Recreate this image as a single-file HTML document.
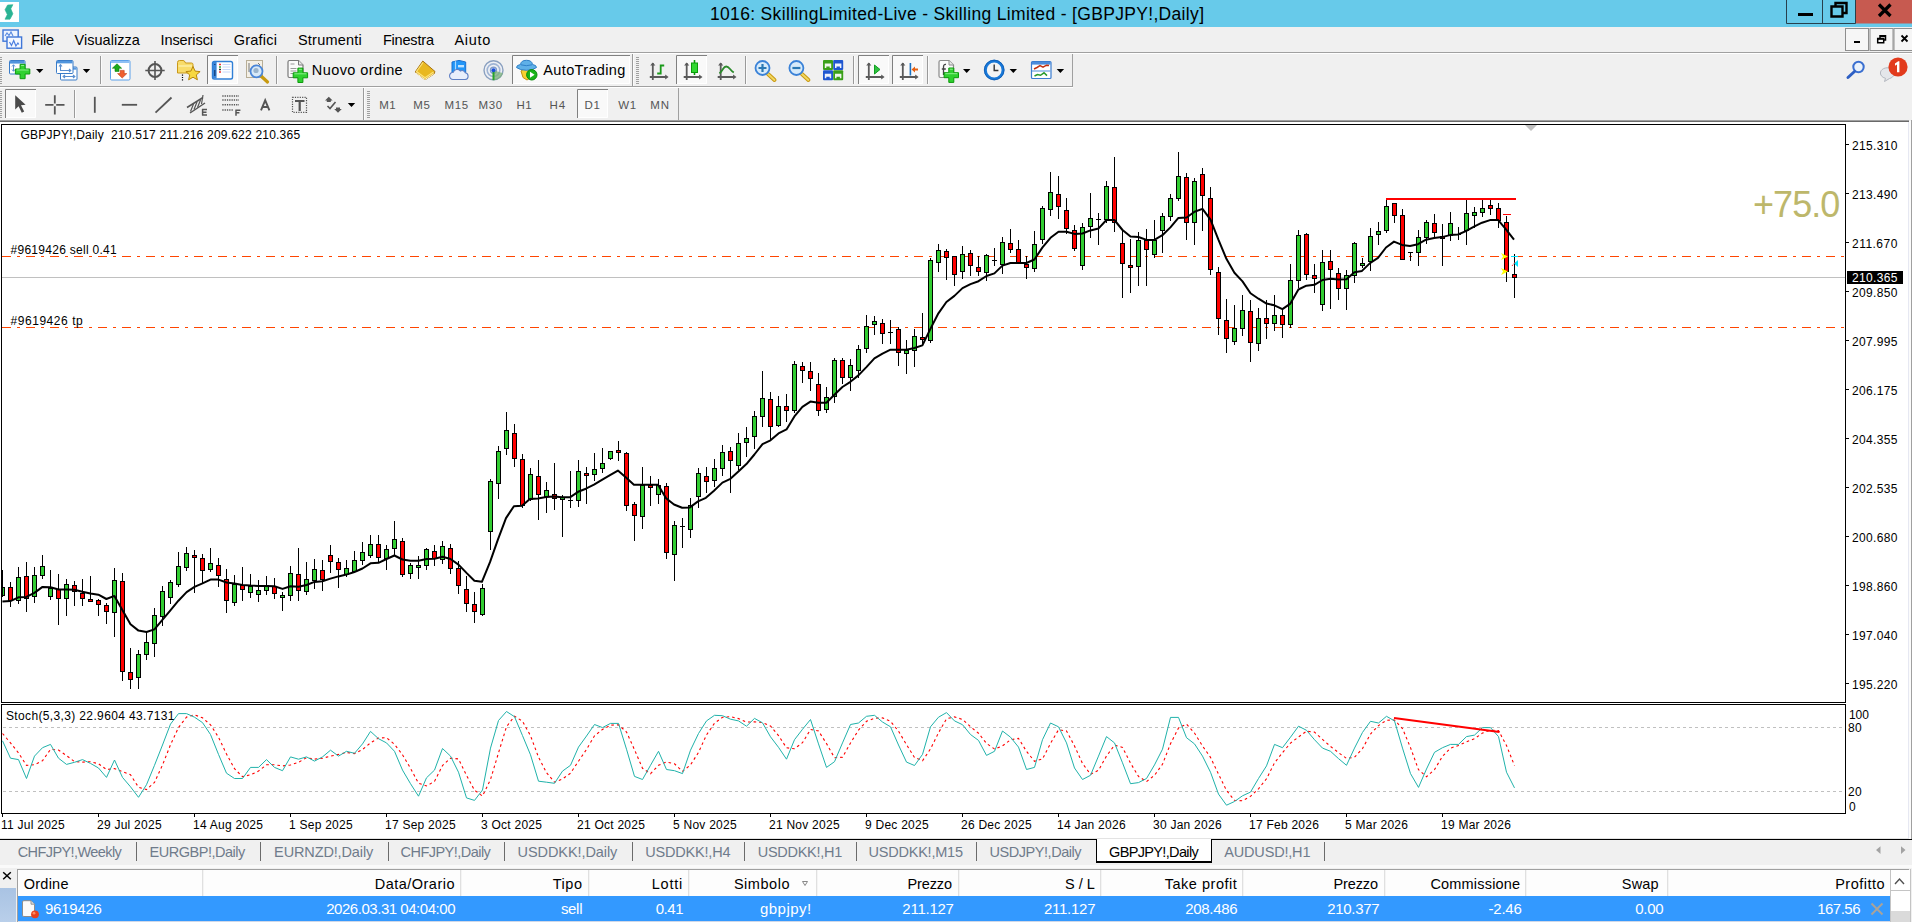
<!DOCTYPE html>
<html><head><meta charset="utf-8"><title>MT4</title><style>
html,body{margin:0;padding:0}
body{width:1912px;height:922px;position:relative;overflow:hidden;background:#f0f0f0;font-family:"Liberation Sans",sans-serif}
.t{position:absolute;white-space:pre;line-height:1;font-family:"Liberation Sans",sans-serif}
.a{position:absolute}
</style></head><body>
<div class="a" style="left:0px;top:0px;width:1912px;height:27px;background:#67caea;"></div>
<div class="a" style="left:0px;top:52px;width:1912px;height:1px;background:#a0a0a0;"></div>
<div class="a" style="left:0px;top:53px;width:1912px;height:1px;background:#ffffff;"></div>
<div class="a" style="left:0px;top:86px;width:1073px;height:1px;background:#a0a0a0;"></div>
<div class="a" style="left:0px;top:87px;width:1073px;height:1px;background:#ffffff;"></div>
<div class="a" style="left:0px;top:120px;width:1909px;height:1px;background:#a0a0a0;"></div>
<div class="a" style="left:1911px;top:120px;width:1px;height:1px;background:#a0a0a0;"></div><svg width="1912" height="719" viewBox="0 121 1912 719" style="position:absolute;left:0;top:121px" shape-rendering="crispEdges">
<rect x="0" y="121" width="1912" height="719" fill="#fff"/>
<rect x="0" y="121" width="1909" height="1" fill="#696969"/>
<rect x="1908" y="122" width="1" height="717" fill="#e6e8f2"/>
<rect x="1909" y="121" width="2" height="718" fill="#fbfbfb"/>
<rect x="1911" y="121" width="1" height="719" fill="#a0a0a0"/>
<rect x="0" y="838" width="1909" height="1" fill="#e3e3e3"/>
<g fill="#000">
<rect x="1" y="124" width="1845" height="1"/><rect x="1" y="124" width="1" height="579"/><rect x="1845" y="124" width="1" height="579"/><rect x="1" y="702" width="1845" height="1"/>
<rect x="1" y="704" width="1845" height="1"/><rect x="1" y="704" width="1" height="110"/><rect x="1845" y="704" width="1" height="110"/><rect x="1" y="813" width="1845" height="1"/>
</g>
<rect x="2" y="277" width="1843" height="1" fill="#c0c0c0"/>
<line x1="2" y1="256.5" x2="1845" y2="256.5" stroke="#ff4500" stroke-width="1" stroke-dasharray="9 6 3 6"/>
<line x1="2" y1="327.5" x2="1845" y2="327.5" stroke="#ff4500" stroke-width="1" stroke-dasharray="9 6 3 6"/>
<line x1="3" y1="727.5" x2="1845" y2="727.5" stroke="#c0c0c0" stroke-width="1" stroke-dasharray="3 3"/>
<line x1="3" y1="791.5" x2="1845" y2="791.5" stroke="#c0c0c0" stroke-width="1" stroke-dasharray="3 3"/>
<path d="M1525 125h12l-6 6z" fill="#c0c0c0" shape-rendering="auto"/>
<path d="M2.5 570v27M10.5 582v25M18.5 567v37M26.5 562v50M34.5 567v36M42.5 555v24M50.5 570v30M58.5 574v51M66.5 579v37M74.5 581v25M82.5 579v27M90.5 576v26M98.5 599v17M106.5 603v21M114.5 568v69M122.5 573v108M130.5 648v41M138.5 650v39M146.5 632v28M154.5 608v49M162.5 586v40M170.5 580v24M178.5 552v35M186.5 547v24M194.5 550v43M202.5 554v29M210.5 548v24M218.5 558v29M226.5 569v44M234.5 575v31M242.5 567v34M250.5 574v24M258.5 580v22M266.5 576v19M274.5 578v21M282.5 592v19M290.5 566v35M298.5 548v53M306.5 562v33M314.5 559v30M322.5 560v31M330.5 545v28M338.5 558v30M346.5 560v17M354.5 551v22M362.5 542v23M370.5 535v23M378.5 535v27M386.5 545v25M394.5 521v34M402.5 538v39M410.5 563v16M418.5 556v23M426.5 548v22M434.5 545v21M442.5 541v23M450.5 544v30M458.5 561v33M466.5 576v36M474.5 592v31M482.5 584v32M490.5 479v71M498.5 446v53M506.5 412v43M514.5 424v43M522.5 454v54M530.5 468v33M538.5 460v60M546.5 482v31M554.5 463v47M562.5 495v42M570.5 471v37M578.5 460v47M586.5 467v37M594.5 453v28M602.5 448v25M610.5 451v9M618.5 441v20M626.5 452v59M634.5 502v39M642.5 467v62M650.5 476v30M658.5 479v25M666.5 483v76M674.5 521v60M682.5 518v30M690.5 498v40M698.5 468v40M706.5 467v26M714.5 459v28M722.5 445v31M730.5 447v46M738.5 433v37M746.5 427v30M754.5 411v38M762.5 371v56M770.5 392v48M778.5 396v31M786.5 394v28M794.5 361v52M802.5 362v21M810.5 362v29M818.5 373v43M826.5 387v26M834.5 358v45M842.5 358v26M850.5 359v32M858.5 345v33M866.5 315v38M874.5 316v19M882.5 319v25M890.5 320v24M898.5 327v39M906.5 340v34M914.5 329v38M922.5 313v32M930.5 258v85M938.5 244v28M946.5 249v31M954.5 256v30M962.5 246v33M970.5 250v26M978.5 256v20M986.5 254v27M994.5 248v18M1002.5 237v37M1010.5 229v24M1018.5 240v23M1026.5 256v23M1034.5 231v41M1042.5 206v38M1050.5 172v44M1058.5 176v43M1066.5 198v36M1074.5 225v26M1082.5 223v47M1090.5 193v45M1098.5 213v32M1106.5 181v42M1114.5 157v75M1122.5 230v68M1130.5 239v54M1138.5 232v54M1146.5 229v57M1154.5 220v38M1162.5 213v40M1170.5 194v27M1178.5 152v49M1186.5 173v67M1194.5 178v67M1202.5 168v63M1210.5 187v88M1218.5 267v68M1226.5 299v54M1234.5 305v40M1242.5 295v41M1250.5 300v62M1258.5 308v43M1266.5 300v39M1274.5 295v36M1282.5 309v29M1290.5 264v64M1298.5 230v58M1306.5 233v47M1314.5 264v29M1322.5 250v61M1330.5 250v59M1338.5 268v32M1346.5 270v40M1354.5 242v41M1362.5 258v10M1370.5 228v43M1378.5 222v23M1386.5 199v34M1394.5 203v20M1402.5 209v51M1410.5 252v9M1418.5 230v36M1426.5 220v24M1434.5 214v24M1442.5 224v42M1450.5 212v29M1458.5 227v13M1466.5 199v46M1474.5 207v21M1482.5 200v17M1490.5 200v15M1498.5 203v25M1506.5 216v66M1514.5 254v44" stroke="#000" stroke-width="1" fill="none"/>
<g fill="#32cd32" stroke="#000" stroke-width="1"><rect x="2.5" y="587.5" width="2" height="8"/><rect x="16.5" y="577.5" width="4" height="23"/><rect x="32.5" y="575.5" width="4" height="21"/><rect x="40.5" y="566.5" width="4" height="9"/><rect x="48.5" y="588.5" width="4" height="8"/><rect x="64.5" y="584.5" width="4" height="14"/><rect x="112.5" y="580.5" width="4" height="32"/><rect x="136.5" y="654.5" width="4" height="23"/><rect x="144.5" y="642.5" width="4" height="12"/><rect x="152.5" y="615.5" width="4" height="28"/><rect x="160.5" y="591.5" width="4" height="25"/><rect x="168.5" y="582.5" width="4" height="15"/><rect x="176.5" y="566.5" width="4" height="18"/><rect x="184.5" y="553.5" width="4" height="14"/><rect x="208.5" y="563.5" width="4" height="6"/><rect x="232.5" y="584.5" width="4" height="18"/><rect x="248.5" y="586.5" width="4" height="6"/><rect x="256.5" y="590.5" width="4" height="4"/><rect x="264.5" y="585.5" width="4" height="5"/><rect x="280.5" y="595.5" width="4" height="2"/><rect x="288.5" y="573.5" width="4" height="22"/><rect x="304.5" y="579.5" width="4" height="12"/><rect x="312.5" y="569.5" width="4" height="11"/><rect x="344.5" y="568.5" width="4" height="6"/><rect x="352.5" y="560.5" width="4" height="11"/><rect x="360.5" y="552.5" width="4" height="8"/><rect x="368.5" y="544.5" width="4" height="11"/><rect x="384.5" y="549.5" width="4" height="9"/><rect x="392.5" y="539.5" width="4" height="9"/><rect x="408.5" y="565.5" width="4" height="8"/><rect x="416.5" y="565.5" width="4" height="2"/><rect x="424.5" y="549.5" width="4" height="16"/><rect x="440.5" y="546.5" width="4" height="13"/><rect x="480.5" y="588.5" width="4" height="26"/><rect x="488.5" y="481.5" width="4" height="50"/><rect x="496.5" y="451.5" width="4" height="32"/><rect x="504.5" y="430.5" width="4" height="18"/><rect x="528.5" y="474.5" width="4" height="25"/><rect x="544.5" y="490.5" width="4" height="6"/><rect x="560.5" y="497.5" width="4" height="2"/><rect x="576.5" y="471.5" width="4" height="29"/><rect x="592.5" y="469.5" width="4" height="5"/><rect x="600.5" y="463.5" width="4" height="5"/><rect x="608.5" y="451.5" width="4" height="7"/><rect x="640.5" y="485.5" width="4" height="31"/><rect x="656.5" y="485.5" width="4" height="9"/><rect x="672.5" y="525.5" width="4" height="29"/><rect x="688.5" y="505.5" width="4" height="24"/><rect x="696.5" y="473.5" width="4" height="23"/><rect x="712.5" y="468.5" width="4" height="12"/><rect x="720.5" y="452.5" width="4" height="16"/><rect x="736.5" y="443.5" width="4" height="22"/><rect x="744.5" y="438.5" width="4" height="4"/><rect x="752.5" y="416.5" width="4" height="20"/><rect x="760.5" y="398.5" width="4" height="18"/><rect x="776.5" y="406.5" width="4" height="19"/><rect x="792.5" y="364.5" width="4" height="46"/><rect x="824.5" y="397.5" width="4" height="12"/><rect x="832.5" y="360.5" width="4" height="36"/><rect x="848.5" y="365.5" width="4" height="12"/><rect x="856.5" y="349.5" width="4" height="21"/><rect x="864.5" y="326.5" width="4" height="22"/><rect x="872.5" y="321.5" width="4" height="3"/><rect x="904.5" y="350.5" width="4" height="3"/><rect x="912.5" y="336.5" width="4" height="14"/><rect x="928.5" y="260.5" width="4" height="80"/><rect x="936.5" y="250.5" width="4" height="12"/><rect x="960.5" y="254.5" width="4" height="17"/><rect x="984.5" y="255.5" width="4" height="17"/><rect x="1000.5" y="242.5" width="4" height="22"/><rect x="1032.5" y="244.5" width="4" height="24"/><rect x="1040.5" y="208.5" width="4" height="31"/><rect x="1048.5" y="192.5" width="4" height="17"/><rect x="1080.5" y="227.5" width="4" height="38"/><rect x="1088.5" y="218.5" width="4" height="8"/><rect x="1104.5" y="186.5" width="4" height="33"/><rect x="1136.5" y="240.5" width="4" height="26"/><rect x="1152.5" y="240.5" width="4" height="14"/><rect x="1160.5" y="216.5" width="4" height="14"/><rect x="1168.5" y="198.5" width="4" height="18"/><rect x="1176.5" y="176.5" width="4" height="22"/><rect x="1192.5" y="181.5" width="4" height="41"/><rect x="1232.5" y="328.5" width="4" height="13"/><rect x="1240.5" y="310.5" width="4" height="18"/><rect x="1256.5" y="318.5" width="4" height="25"/><rect x="1272.5" y="315.5" width="4" height="8"/><rect x="1288.5" y="280.5" width="4" height="44"/><rect x="1296.5" y="235.5" width="4" height="45"/><rect x="1320.5" y="262.5" width="4" height="42"/><rect x="1344.5" y="275.5" width="4" height="13"/><rect x="1352.5" y="243.5" width="4" height="32"/><rect x="1360.5" y="263.5" width="4" height="2"/><rect x="1368.5" y="236.5" width="4" height="25"/><rect x="1376.5" y="231.5" width="4" height="3"/><rect x="1384.5" y="206.5" width="4" height="24"/><rect x="1416.5" y="237.5" width="4" height="15"/><rect x="1424.5" y="222.5" width="4" height="15"/><rect x="1448.5" y="223.5" width="4" height="12"/><rect x="1464.5" y="213.5" width="4" height="17"/><rect x="1472.5" y="212.5" width="4" height="3"/><rect x="1480.5" y="208.5" width="4" height="4"/></g>
<g fill="#ff0000" stroke="#000" stroke-width="1"><rect x="8.5" y="587.5" width="4" height="13"/><rect x="24.5" y="576.5" width="4" height="22"/><rect x="56.5" y="589.5" width="4" height="9"/><rect x="72.5" y="585.5" width="4" height="6"/><rect x="80.5" y="593.5" width="4" height="5"/><rect x="88.5" y="599.5" width="4" height="2"/><rect x="96.5" y="600.5" width="4" height="4"/><rect x="104.5" y="605.5" width="4" height="6"/><rect x="120.5" y="581.5" width="4" height="90"/><rect x="128.5" y="672.5" width="4" height="7"/><rect x="192.5" y="555.5" width="4" height="2"/><rect x="200.5" y="558.5" width="4" height="12"/><rect x="216.5" y="565.5" width="4" height="10"/><rect x="224.5" y="579.5" width="4" height="21"/><rect x="240.5" y="585.5" width="4" height="4"/><rect x="272.5" y="586.5" width="4" height="7"/><rect x="296.5" y="574.5" width="4" height="16"/><rect x="320.5" y="570.5" width="4" height="9"/><rect x="328.5" y="555.5" width="4" height="6"/><rect x="336.5" y="562.5" width="4" height="7"/><rect x="376.5" y="544.5" width="4" height="13"/><rect x="400.5" y="541.5" width="4" height="33"/><rect x="432.5" y="551.5" width="4" height="7"/><rect x="448.5" y="548.5" width="4" height="20"/><rect x="456.5" y="568.5" width="4" height="17"/><rect x="464.5" y="589.5" width="4" height="14"/><rect x="472.5" y="604.5" width="4" height="7"/><rect x="512.5" y="433.5" width="4" height="25"/><rect x="520.5" y="459.5" width="4" height="46"/><rect x="536.5" y="476.5" width="4" height="18"/><rect x="552.5" y="494.5" width="4" height="4"/><rect x="584.5" y="473.5" width="4" height="2"/><rect x="616.5" y="450.5" width="4" height="2"/><rect x="624.5" y="453.5" width="4" height="52"/><rect x="632.5" y="504.5" width="4" height="11"/><rect x="648.5" y="485.5" width="4" height="2"/><rect x="664.5" y="486.5" width="4" height="66"/><rect x="704.5" y="476.5" width="4" height="5"/><rect x="728.5" y="451.5" width="4" height="9"/><rect x="768.5" y="399.5" width="4" height="27"/><rect x="784.5" y="406.5" width="4" height="4"/><rect x="800.5" y="366.5" width="4" height="4"/><rect x="808.5" y="371.5" width="4" height="7"/><rect x="816.5" y="384.5" width="4" height="26"/><rect x="840.5" y="360.5" width="4" height="17"/><rect x="880.5" y="323.5" width="4" height="10"/><rect x="896.5" y="329.5" width="4" height="23"/><rect x="920.5" y="337.5" width="4" height="2"/><rect x="944.5" y="251.5" width="4" height="6"/><rect x="952.5" y="256.5" width="4" height="18"/><rect x="968.5" y="253.5" width="4" height="12"/><rect x="976.5" y="267.5" width="4" height="4"/><rect x="1008.5" y="243.5" width="4" height="6"/><rect x="1016.5" y="249.5" width="4" height="13"/><rect x="1024.5" y="264.5" width="4" height="3"/><rect x="1056.5" y="194.5" width="4" height="12"/><rect x="1064.5" y="210.5" width="4" height="18"/><rect x="1072.5" y="230.5" width="4" height="18"/><rect x="1112.5" y="187.5" width="4" height="35"/><rect x="1120.5" y="243.5" width="4" height="20"/><rect x="1128.5" y="265.5" width="4" height="2"/><rect x="1144.5" y="240.5" width="4" height="9"/><rect x="1184.5" y="177.5" width="4" height="45"/><rect x="1200.5" y="174.5" width="4" height="21"/><rect x="1208.5" y="198.5" width="4" height="71"/><rect x="1216.5" y="272.5" width="4" height="46"/><rect x="1224.5" y="320.5" width="4" height="18"/><rect x="1248.5" y="311.5" width="4" height="31"/><rect x="1264.5" y="318.5" width="4" height="5"/><rect x="1280.5" y="315.5" width="4" height="9"/><rect x="1304.5" y="234.5" width="4" height="40"/><rect x="1312.5" y="275.5" width="4" height="3"/><rect x="1328.5" y="261.5" width="4" height="8"/><rect x="1336.5" y="273.5" width="4" height="15"/><rect x="1392.5" y="203.5" width="4" height="12"/><rect x="1400.5" y="215.5" width="4" height="44"/><rect x="1432.5" y="223.5" width="4" height="9"/><rect x="1440.5" y="236.5" width="4" height="2"/><rect x="1488.5" y="205.5" width="4" height="3"/><rect x="1496.5" y="208.5" width="4" height="12"/><rect x="1504.5" y="222.5" width="4" height="49"/><rect x="1512.5" y="274.5" width="4" height="3"/></g>
<path d="M568 500h5v1h-5zM680 526h5v1h-5zM888 332h5v1h-5zM992 260h5v1h-5zM1096 219h5v1h-5zM1408 252h5v1h-5zM1456 234h5v1h-5z" fill="#000"/>
<polyline points="2.4,601.6 10.4,601.1 18.4,597.3 26.4,596.9 34.4,592.9 42.5,586.9 50.5,587.2 58.5,589.5 66.5,589.5 74.4,589.8 82.4,591.7 90.4,593.4 98.4,594.7 106.4,599 114.4,595.9 122.5,610.3 130.5,624.2 138.5,630.6 146.5,632 154.4,629.4 162.4,619.8 170.4,610.3 178.4,600.7 186.6,592.1 194.5,586.9 202.5,583.4 210.5,579.6 218.5,579.6 226.5,582.5 234.4,583.4 242.4,585 250.4,585.6 258.4,585.9 266.4,585.9 274.4,586.2 282.5,588.9 290.5,586.2 298.5,586.8 306.5,585 314.4,581.9 322.4,581.2 330.4,578.6 338.4,576.4 346.4,574.6 354.4,572 362.5,568.5 370.5,563.3 378.5,562.8 386.5,559 394.4,555.5 402.4,559.5 410.4,560.7 418.4,560.7 426.6,559 434.5,558.7 442.5,556.7 450.5,559 458.5,564.6 466.5,572.9 474.4,580.7 481.9,581.8 490,562.2 497.9,539.6 506,518.1 513.9,506.2 522,505.7 529.9,499 538,498.5 546.1,497.1 554,496.6 562.1,497.3 569.9,497.3 578.1,491.8 585.9,488.7 594,484.7 601.9,479.9 610,475.1 617.9,470.6 626,477.5 633.9,484.7 642,484.7 649.9,484.7 658,484.7 666.1,498.3 674,504.5 682.1,507.8 689.9,507.4 698,501.4 705.9,497.8 714,490.7 722.4,482.6 730.4,478.8 738.4,471.4 746.4,464.1 754.4,454.5 762.5,444.1 770.5,440.3 778.5,433.4 786.5,429.4 794.4,416.4 802.4,406.8 810.4,401.6 818.4,402.8 826.4,402.8 834.4,394.7 842.4,387 850.4,381.8 858.4,375.4 866.4,367.1 874.4,358.4 882.5,353.6 890.5,349.7 898.5,349.7 906.5,349.7 914.4,348 922.4,345.4 930.4,328.9 938.4,313.3 946.4,302 954.4,295.9 962.5,288.1 970.5,284.1 978.5,281.2 986.5,276 994.4,273.4 1002.4,265.6 1010.4,263 1018.4,263 1026.4,263 1034.4,259.5 1042.5,247.4 1050.5,237.8 1058.5,231.8 1066.5,231.8 1074.4,233.9 1082.4,233.5 1090.4,230.4 1098.4,228.6 1106.4,220 1114.4,220 1122.5,230 1130.5,236.6 1138.5,237 1146.5,239.9 1154.4,239.9 1162.4,235.2 1170.4,227.4 1178.4,217.9 1186.6,217.5 1194.5,211.8 1202.5,208.9 1210.5,219.6 1218.4,239.7 1226.4,258.8 1234.4,272.7 1242.5,281.4 1250.5,293.2 1258.5,298.7 1266.5,303.6 1274.4,305.3 1282.4,309.1 1290.4,303.6 1298.4,289.5 1306.4,285.7 1314.4,284.8 1322.5,280 1330.5,278.8 1338.5,279.6 1346.5,279.3 1354.4,272.3 1362,270.9 1370,263.1 1378,257.9 1386,247.5 1394,241.6 1402,244.9 1410,245.9 1418,244.2 1426,239.7 1434.1,238.1 1442,237.1 1449.9,235.1 1458,234.5 1465.9,231.2 1474,226.6 1482,222.7 1490,220.1 1498,219.9 1506,229.3 1514,239.7" fill="none" stroke="#000" stroke-width="2" stroke-linejoin="round" shape-rendering="auto"/>
<rect x="1386" y="198" width="130" height="2" fill="#ff0000"/>
<rect x="1503" y="214" width="8" height="1" fill="#ff0000"/>
<g shape-rendering="auto"><path d="M1501 253l7 3.5l-7 3.5l2-3.5z" fill="#ffff00"/><path d="M1501 268l7 3.5l-7 3.5l2-3.5z" fill="#ffff00"/>
<rect x="1511" y="256" width="7" height="1" fill="#00e5ff"/><path d="M1518 260v7l-4-3.5z" fill="#00e5ff"/>
<path d="M1512 266l3-4" stroke="#ff0000" stroke-width="1" stroke-dasharray="1 1"/></g>
<g shape-rendering="auto" fill="none">
<polyline points="2.5,733.5 10.5,742.9 18.5,752.9 26.5,765.4 34.5,764.7 42.5,760.7 50.5,749.4 58.5,750.1 66.5,755.6 74.5,761.6 82.5,762.1 90.5,761.8 98.5,763.7 106.5,769.6 114.5,768.5 122.5,771.6 130.5,774.8 138.5,787.2 146.5,789.6 154.5,782.4 162.5,765 170.5,744.8 178.5,727.5 186.5,717.1 194.5,714.8 202.5,717.8 210.5,724.8 218.5,737.2 226.5,754 234.5,768.7 242.5,776.7 250.5,774.8 258.5,771.1 266.5,764.8 274.5,764.8 282.5,765.9 290.5,765 298.5,762.3 306.5,757.7 314.5,759.1 322.5,758.3 330.5,756.1 338.5,754.4 346.5,752.5 354.5,753.6 362.5,749.5 370.5,742.9 378.5,738 386.5,737.7 394.5,744.3 402.5,754.7 410.5,768.3 418.5,783.3 426.5,785.9 434.5,781.4 442.5,765.5 450.5,758.2 458.5,758.9 466.5,775.4 474.5,790.2 482.5,796.1 490.5,779.5 498.5,752.9 506.5,726.7 514.5,716.2 522.5,721.3 530.5,735.7 538.5,757.2 546.5,772.7 554.5,782.2 562.5,778.9 570.5,773.2 578.5,761.2 586.5,749.4 594.5,735.8 602.5,729.4 610.5,725.2 618.5,724.8 626.5,732 634.5,749.7 642.5,768.3 650.5,773.7 658.5,765.3 666.5,762 674.5,763.8 682.5,771.3 690.5,764.9 698.5,752.4 706.5,734.9 714.5,723.2 722.5,717.3 730.5,716.7 738.5,718.6 746.5,722.1 754.5,721.8 762.5,722.5 770.5,726 778.5,735.6 786.5,747.8 794.5,748.7 802.5,742.7 810.5,729.5 818.5,730.9 826.5,743.6 834.5,757.7 842.5,757.3 850.5,743 858.5,730.1 866.5,721.3 874.5,718.2 882.5,717.9 890.5,721.3 898.5,731.2 906.5,744.6 914.5,757.5 922.5,760.7 930.5,748.9 938.5,732.8 946.5,718.8 954.5,716.9 962.5,719.4 970.5,726.7 978.5,733.2 986.5,743.4 994.5,749 1002.5,745.9 1010.5,739.8 1018.5,738.4 1026.5,751.3 1034.5,761.3 1042.5,758.9 1050.5,743.4 1058.5,729.8 1066.5,730.9 1074.5,745.9 1082.5,763.5 1090.5,774.3 1098.5,770.3 1106.5,756 1114.5,745.2 1122.5,747.4 1130.5,763.1 1138.5,776.4 1146.5,781.6 1154.5,775.3 1162.5,764.2 1170.5,743.8 1178.5,728 1186.5,724.1 1194.5,733 1202.5,745.9 1210.5,757.4 1218.5,774.1 1226.5,790.5 1234.5,800.3 1242.5,800.8 1250.5,796.4 1258.5,788.8 1266.5,778.8 1274.5,762.9 1282.5,752.6 1290.5,743.1 1298.5,737 1306.5,731.2 1314.5,732.1 1322.5,739.4 1330.5,746.4 1338.5,752.6 1346.5,758.4 1354.5,757.3 1362.5,748.6 1370.5,734 1378.5,725.6 1386.5,720.2 1394.5,720.1 1402.5,728.5 1410.5,747.6 1418.5,769.7 1426.5,776.7 1434.5,769.6 1442.5,756.3 1450.5,748.1 1458.5,745.5 1466.5,741.8 1474.5,738.7 1482.5,733.1 1490.5,730.1 1498.5,730.6 1506.5,745.5 1514.5,765.6" stroke="#ff0000" stroke-width="1.1" stroke-dasharray="2.6 3"/>
<polyline points="2.5,740.8 10.5,758.2 18.5,759.6 26.5,778.5 34.5,756.1 42.5,747.7 50.5,744.4 58.5,758.2 66.5,764.4 74.5,762.3 82.5,759.6 90.5,763.4 98.5,768 106.5,777.4 114.5,760 122.5,777.4 130.5,786.8 138.5,797.3 146.5,784.7 154.5,765.3 162.5,745 170.5,724.1 178.5,713.6 186.5,713.6 194.5,717.2 202.5,722.6 210.5,734.5 218.5,754.4 226.5,773.2 234.5,778.5 242.5,778.5 250.5,767.4 258.5,767.4 266.5,759.6 274.5,767.4 282.5,770.7 290.5,756.9 298.5,759.2 306.5,756.9 314.5,761.1 322.5,756.9 330.5,750.2 338.5,756.1 346.5,751.3 354.5,753.3 362.5,743.9 370.5,731.4 378.5,738.7 386.5,742.9 394.5,751.3 402.5,770.1 410.5,783.7 418.5,796.2 426.5,777.8 434.5,770.1 442.5,748.5 450.5,756.1 458.5,772.2 466.5,797.9 474.5,800.4 482.5,790 490.5,748.1 498.5,720.5 506.5,711.5 514.5,716.7 522.5,735.6 530.5,754.8 538.5,781.2 546.5,782.2 554.5,783.3 562.5,771.1 570.5,765.3 578.5,747.1 586.5,736 594.5,724.5 602.5,727.6 610.5,723.4 618.5,723.4 626.5,749.2 634.5,776.4 642.5,779.5 650.5,765.3 658.5,751.3 666.5,769.5 674.5,770.7 682.5,773.6 690.5,750.2 698.5,733.5 706.5,720.9 714.5,715.3 722.5,715.7 730.5,719.2 738.5,720.9 746.5,726.2 754.5,718.4 762.5,722.8 770.5,736.8 778.5,747.3 786.5,759.2 794.5,739.7 802.5,729.3 810.5,719.5 818.5,743.9 826.5,767.4 834.5,761.7 842.5,742.9 850.5,724.5 858.5,723 866.5,716.3 874.5,715.3 882.5,722 890.5,726.8 898.5,745 906.5,762.1 914.5,765.5 922.5,754.4 930.5,726.8 938.5,717.2 946.5,712.6 954.5,720.9 962.5,724.7 970.5,734.5 978.5,740.4 986.5,755.4 994.5,751.3 1002.5,731 1010.5,737.2 1018.5,747.1 1026.5,769.5 1034.5,767.4 1042.5,739.7 1050.5,723 1058.5,726.8 1066.5,742.9 1074.5,768 1082.5,779.5 1090.5,775.3 1098.5,756.1 1106.5,736.6 1114.5,742.9 1122.5,762.8 1130.5,783.7 1138.5,782.6 1146.5,778.5 1154.5,764.9 1162.5,749.2 1170.5,717.4 1178.5,717.4 1186.5,737.7 1194.5,743.9 1202.5,756.1 1210.5,772.2 1218.5,794.1 1226.5,805.2 1234.5,801.5 1242.5,795.8 1250.5,792.1 1258.5,778.5 1266.5,765.9 1274.5,744.4 1282.5,747.7 1290.5,737.2 1298.5,726.2 1306.5,730.3 1314.5,739.7 1322.5,748.1 1330.5,751.3 1338.5,758.6 1346.5,765.3 1354.5,748.1 1362.5,732.4 1370.5,721.3 1378.5,723 1386.5,716.3 1394.5,720.9 1402.5,748.1 1410.5,773.6 1418.5,787.4 1426.5,769 1434.5,752.3 1442.5,747.7 1450.5,744.4 1458.5,744.4 1466.5,736.6 1474.5,735.1 1482.5,727.6 1490.5,727.6 1498.5,736.6 1506.5,772.2 1514.5,787.9" stroke="#20b2aa" stroke-width="1"/>
<path d="M1394 718L1499.5 732" stroke="#ff0000" stroke-width="2.2"/>
</g>
<g fill="#000">
<rect x="1846" y="144" width="3" height="1"/>
<rect x="1846" y="193" width="3" height="1"/>
<rect x="1846" y="242" width="3" height="1"/>
<rect x="1846" y="291" width="3" height="1"/>
<rect x="1846" y="340" width="3" height="1"/>
<rect x="1846" y="389" width="3" height="1"/>
<rect x="1846" y="438" width="3" height="1"/>
<rect x="1846" y="487" width="3" height="1"/>
<rect x="1846" y="536" width="3" height="1"/>
<rect x="1846" y="585" width="3" height="1"/>
<rect x="1846" y="634" width="3" height="1"/>
<rect x="1846" y="683" width="3" height="1"/>
</g>
<rect x="1847" y="271" width="56" height="13" fill="#000"/>
<g fill="#000">
<rect x="2" y="814" width="1" height="3"/>
<rect x="98" y="814" width="1" height="3"/>
<rect x="194" y="814" width="1" height="3"/>
<rect x="290" y="814" width="1" height="3"/>
<rect x="386" y="814" width="1" height="3"/>
<rect x="482" y="814" width="1" height="3"/>
<rect x="578" y="814" width="1" height="3"/>
<rect x="674" y="814" width="1" height="3"/>
<rect x="770" y="814" width="1" height="3"/>
<rect x="866" y="814" width="1" height="3"/>
<rect x="962" y="814" width="1" height="3"/>
<rect x="1058" y="814" width="1" height="3"/>
<rect x="1154" y="814" width="1" height="3"/>
<rect x="1250" y="814" width="1" height="3"/>
<rect x="1346" y="814" width="1" height="3"/>
<rect x="1442" y="814" width="1" height="3"/>
</g>
<rect x="0" y="839" width="1096" height="1" fill="#000"/><rect x="1211" y="839" width="701" height="1" fill="#000"/>
</svg><div class="a" style="left:1096px;top:839px;width:116px;height:24px;background:#fff;box-sizing:border-box;border:1px solid #000;border-top:none;border-bottom:2px solid #000"></div>
<div class="a" style="left:136px;top:842px;width:1px;height:19px;background:#6b6b6b;"></div>
<div class="a" style="left:260px;top:842px;width:1px;height:19px;background:#6b6b6b;"></div>
<div class="a" style="left:388px;top:842px;width:1px;height:19px;background:#6b6b6b;"></div>
<div class="a" style="left:504px;top:842px;width:1px;height:19px;background:#6b6b6b;"></div>
<div class="a" style="left:632px;top:842px;width:1px;height:19px;background:#6b6b6b;"></div>
<div class="a" style="left:744px;top:842px;width:1px;height:19px;background:#6b6b6b;"></div>
<div class="a" style="left:856px;top:842px;width:1px;height:19px;background:#6b6b6b;"></div>
<div class="a" style="left:976px;top:842px;width:1px;height:19px;background:#6b6b6b;"></div>
<div class="a" style="left:1324px;top:842px;width:1px;height:19px;background:#6b6b6b;"></div>
<div class="a" style="left:0px;top:865px;width:1912px;height:3px;background:#fafafa;"></div>
<div class="a" style="left:0px;top:868px;width:1912px;height:1px;background:#f0f0f0;"></div>
<div class="a" style="left:0px;top:869px;width:17px;height:53px;background:#f0f0f0;"></div>
<div class="a" style="left:0px;top:888px;width:16px;height:34px;background:linear-gradient(#a9c3e3,#b9cfea);"></div>
<div class="a" style="left:17px;top:869px;width:1892px;height:53px;background:#fff;box-sizing:border-box;border-top:1px solid #a0a0a0;border-left:1px solid #a0a0a0"></div>
<div class="a" style="left:18px;top:870px;width:1873px;height:26px;background:#fdfdfd;"></div>
<div class="a" style="left:202px;top:870px;width:1px;height:26px;background:#e0e0e0;"></div>
<div class="a" style="left:203px;top:870px;width:1px;height:26px;background:#f4f4f4;"></div>
<div class="a" style="left:460px;top:870px;width:1px;height:26px;background:#e0e0e0;"></div>
<div class="a" style="left:461px;top:870px;width:1px;height:26px;background:#f4f4f4;"></div>
<div class="a" style="left:588px;top:870px;width:1px;height:26px;background:#e0e0e0;"></div>
<div class="a" style="left:589px;top:870px;width:1px;height:26px;background:#f4f4f4;"></div>
<div class="a" style="left:688px;top:870px;width:1px;height:26px;background:#e0e0e0;"></div>
<div class="a" style="left:689px;top:870px;width:1px;height:26px;background:#f4f4f4;"></div>
<div class="a" style="left:816px;top:870px;width:1px;height:26px;background:#e0e0e0;"></div>
<div class="a" style="left:817px;top:870px;width:1px;height:26px;background:#f4f4f4;"></div>
<div class="a" style="left:958px;top:870px;width:1px;height:26px;background:#e0e0e0;"></div>
<div class="a" style="left:959px;top:870px;width:1px;height:26px;background:#f4f4f4;"></div>
<div class="a" style="left:1100px;top:870px;width:1px;height:26px;background:#e0e0e0;"></div>
<div class="a" style="left:1101px;top:870px;width:1px;height:26px;background:#f4f4f4;"></div>
<div class="a" style="left:1242px;top:870px;width:1px;height:26px;background:#e0e0e0;"></div>
<div class="a" style="left:1243px;top:870px;width:1px;height:26px;background:#f4f4f4;"></div>
<div class="a" style="left:1384px;top:870px;width:1px;height:26px;background:#e0e0e0;"></div>
<div class="a" style="left:1385px;top:870px;width:1px;height:26px;background:#f4f4f4;"></div>
<div class="a" style="left:1525px;top:870px;width:1px;height:26px;background:#e0e0e0;"></div>
<div class="a" style="left:1526px;top:870px;width:1px;height:26px;background:#f4f4f4;"></div>
<div class="a" style="left:1667px;top:870px;width:1px;height:26px;background:#e0e0e0;"></div>
<div class="a" style="left:1668px;top:870px;width:1px;height:26px;background:#f4f4f4;"></div>
<div class="a" style="left:1890px;top:870px;width:1px;height:26px;background:#e0e0e0;"></div>
<div class="a" style="left:1891px;top:870px;width:1px;height:26px;background:#f4f4f4;"></div>
<div class="a" style="left:18px;top:896px;width:1872px;height:25px;background:#3399ff;"></div>
<div class="a" style="left:18px;top:921px;width:1872px;height:1px;background:#d0d8e8;"></div>
<div class="a" style="left:1891px;top:870px;width:19px;height:20px;background:#fff;"></div>
<div class="a" style="left:1891px;top:891px;width:19px;height:20px;background:#fff;"></div>
<div class="a" style="left:1891px;top:911px;width:19px;height:11px;background:#dadada;"></div>
<div class="a" style="left:1890px;top:870px;width:1px;height:52px;background:#c4c4c4;"></div>
<div class="a" style="left:1891px;top:890px;width:19px;height:1px;background:#c4c4c4;"></div>
<div class="a" style="left:1910px;top:869px;width:1px;height:53px;background:#c4c4c4;"></div>
<div class="a" style="left:1911px;top:869px;width:1px;height:53px;background:#f0f0f0;"></div>
<svg width="1912" height="922" viewBox="0 0 1912 922" style="position:absolute;left:0;top:0">
<path d="M0 57.5h2M0 59.5h2M0 61.5h2M0 63.5h2M0 65.5h2M0 67.5h2M0 69.5h2M0 71.5h2M0 73.5h2M0 75.5h2M0 77.5h2M0 79.5h2M0 81.5h2M0 83.5h2" stroke="#a0a0a0" stroke-width="1" shape-rendering="crispEdges"/>
<rect x="9.5" y="60.5" width="15.5" height="13.5" rx="1" fill="#fff" stroke="#3a7cc8"/><rect x="10" y="61" width="14.5" height="2.6" fill="#4f94dd"/>
<path d="M13.5 65v6 M12 66.5l1.5-1.8 1.5 1.8 M12 69.5l1.5 1.8 1.5-1.8" stroke="#5a8fd0" stroke-width="1" fill="none"/>
<path d="M20.1 64.3h5v4.7h4.7v5h-4.7v4.7h-5v-4.7h-4.7v-5h4.7z" fill="#2fd12f" stroke="#0c9a0c" stroke-width="1"/><path d="M21.1 65.5h3 M16.6 70.0h12.0" stroke="#8af08a" stroke-width="1" fill="none"/>
<path d="M36 69h7.4l-3.7 4z" fill="#000"/>
<rect x="60.5" y="67" width="16.5" height="13" rx="1" fill="#fff" stroke="#3a7cc8"/><rect x="61" y="67.5" width="15.5" height="2.2" fill="#5a9ae0"/>
<path d="M63.5 76.5h11 M65 75l-1.8 1.5 1.8 1.5 M73 75l1.8 1.5-1.8 1.5" stroke="#5a8fd0" stroke-width="1.2" fill="none"/>
<rect x="56.5" y="60.5" width="16.5" height="13" rx="1" fill="#fff" stroke="#3a7cc8"/><rect x="57" y="61" width="15.5" height="2.4" fill="#4f94dd"/>
<path d="M60.5 65v5.5h10 M59 66.5l1.5-1.8 1.5 1.8 M69 69l1.8 1.5-1.8 1.5" stroke="#5a8fd0" stroke-width="1.1" fill="none"/>
<path d="M82.8 69h7.4l-3.7 4z" fill="#000"/>
<rect x="100" y="56" width="1" height="28" fill="#9a9a9a"/><rect x="101" y="56" width="1" height="28" fill="#fbfbfb"/>
<rect x="110.5" y="60.5" width="19.5" height="19.5" rx="1.2" fill="#fff" stroke="#5aa0ea"/><rect x="111" y="61" width="18.5" height="2" fill="#8fc0f4"/>
<path d="M117 63.8l4.6 4.4h-2.6v3.2h-4v-3.2h-2.6z" fill="#1aaa1a" stroke="#0a7a0a" stroke-width=".6"/>
<path d="M122.2 78l4.6-4.4h-2.6v-3.2h-4v3.2h-2.6z" fill="#f06030" stroke="#c03a10" stroke-width=".6"/>
<circle cx="155" cy="70.5" r="6.4" fill="none" stroke="#555" stroke-width="2"/><path d="M145.3 70.5h19.4 M155 61v19" stroke="#555" stroke-width="1.6"/>
<path d="M177.5 73v-10.5q0-2 2-2h3.5q1.5 0 2 1.5l.5 1h6q1.5 0 1.5 1.5v8.5z" fill="#f8dc6a" stroke="#c9981a" stroke-width="1"/><path d="M178.5 66h13.5" stroke="#fdf0a8" stroke-width="1.4"/>
<path d="M182.5 74.5v6" stroke="#000" stroke-width="1.2" stroke-dasharray="1.2 1.2"/>
<path d="M193 66.5l2.1 4.6 5 .5-3.8 3.3 1.1 4.9-4.4-2.6-4.4 2.6 1.1-4.9-3.8-3.3 5-.5z" fill="#f7d840" stroke="#b8860b" stroke-width="1" stroke-linejoin="round"/>
<rect x="207" y="55" width="31" height="29" fill="#f9f9f9"/><path d="M207.5 84V55.5H238" stroke="#808080" stroke-width="1" fill="none"/><path d="M237.5 56V83.5H208" stroke="#ffffff" stroke-width="1" fill="none"/>
<rect x="212.5" y="61.5" width="20" height="17.5" rx="1.8" fill="#fff" stroke="#2f7fd6" stroke-width="1.4"/><rect x="213" y="62" width="3.6" height="16.5" fill="#3a86da"/><path d="M214.8 64v1 M214.8 70v6" stroke="#123a70" stroke-width="1.2"/>
<path d="M219 64.5h2 M219 72h2" stroke="#f03030" stroke-width="1.6"/><path d="M219 67h2" stroke="#30a030" stroke-width="1.6"/><path d="M219 69.5h2" stroke="#333" stroke-width="1.4"/>
<path d="M222.5 64.5h8 M222.5 67h8 M222.5 69.5h8 M222.5 72h8" stroke="#c8d8fa" stroke-width="1"/>
<rect x="246.5" y="60.5" width="16" height="17" fill="#f4f0e6" stroke="#b8ae96"/><path d="M249 63v9 M258 63l2 2" stroke="#777" stroke-width="1"/>
<path d="M261 76l6.5 6" stroke="#c89a10" stroke-width="3.2" stroke-linecap="round"/><circle cx="256.5" cy="71.3" r="6" fill="#d4e8fa" fill-opacity=".9" stroke="#4a86d8" stroke-width="1.8"/><circle cx="256" cy="70.5" r="2.6" fill="#9ab4cc"/>
<rect x="276" y="56" width="1" height="28" fill="#9a9a9a"/><rect x="277" y="56" width="1" height="28" fill="#fbfbfb"/>
<path d="M288 62q0-1.5 1.5-1.5h9l4.5 4.5v11q0 1.5-1.5 1.5h-12q-1.500 0-1.500-1.500z" fill="#fbfbfb" stroke="#7a7a7a" stroke-width="1.2"/><path d="M298.500 60.500v4.500h4.500" fill="#e8e8e8" stroke="#7a7a7a" stroke-width="1"/>
<path d="M290.500 64h4 M290.500 68.500h6 M290.500 71h6 M290.500 73.500h3" stroke="#999" stroke-width="1"/>
<path d="M297.9 68.1h5v4.7h4.7v5h-4.7v4.7h-5v-4.7h-4.7v-5h4.7z" fill="#2fd12f" stroke="#0c9a0c" stroke-width="1"/><path d="M298.9 69.3h3 M294.4 73.8h12.0" stroke="#8af08a" stroke-width="1" fill="none"/>
<path d="M422.800 61l12.200 10.500-1 2.500-9 5.800-9.800-7.800z" fill="#e9b820" stroke="#a87414" stroke-width="1" stroke-linejoin="round"/><path d="M423 62.500l-6.500 9 8.500 6.300 8.500-5.800" fill="none" stroke="#fbe27a" stroke-width="1.2"/><path d="M416 73l9 6.500 9-5.800" fill="none" stroke="#fff3c0" stroke-width="1"/>
<path d="M452 62l7-1.600 6.700 1.600v10.500h-13.700z" fill="#2196f8" stroke="#1a70d0" stroke-width="1"/><path d="M455.500 61.200v10" stroke="#a8d8ff" stroke-width="1.2"/><rect x="458" y="65" width="6" height="2.400" fill="#bfe2ff"/>
<path d="M453 79.500a3.600 3.600 0 0 1 .3-7.200a4 4 0 0 1 7-1.300a3.500 3.500 0 0 1 5 1.800a3.400 3.400 0 0 1 0 6.700z" fill="#e8eefb" stroke="#5f7fc4" stroke-width="1.100"/>
<circle cx="493.500" cy="70.200" r="9.500" fill="#eef0f4" stroke="#8aa0c0" stroke-width="1.400"/><circle cx="493.500" cy="70.200" r="6.300" fill="none" stroke="#9fb4d4" stroke-width="1.600"/><circle cx="493.500" cy="70.200" r="3" fill="none" stroke="#7f9ccc" stroke-width="1.400"/>
<path d="M493.500 70.200v10a10 10 0 0 0 9.500-7z" fill="#7ab07a" fill-opacity=".75"/><path d="M493.500 70.200v10" stroke="#28a428" stroke-width="2"/><circle cx="493.500" cy="70.200" r="2" fill="#1a50d8"/>
<rect x="512" y="55" width="118" height="29" fill="#f9f9f9"/><path d="M512.5 84V55.5H630" stroke="#808080" stroke-width="1" fill="none"/><path d="M629.5 56V83.5H513" stroke="#ffffff" stroke-width="1" fill="none"/>
<path d="M521 71l6-4.500 6 4.500-2 6.500-4 2.500-4-2.500z" fill="#f6d030" stroke="#c09010" stroke-width="1"/>
<path d="M516.500 67.500q0-2.500 4-3q.5-4.200 6-4.200t6 4.200q4 .5 4 3q-3.500 2.800-10 2.800t-10-2.800z" fill="#5fb0e8" stroke="#2f80c8" stroke-width="1"/><path d="M521 64.800q5 1.800 11 0" stroke="#2f80c8" stroke-width="1" fill="none"/>
<circle cx="531.800" cy="74.800" r="5.200" fill="#18b418" stroke="#0a8a0a" stroke-width="1"/><path d="M530 71.800l4.600 3-4.600 3z" fill="#fff"/>
<rect x="632" y="54" width="1" height="32" fill="#9a9a9a"/><rect x="633" y="54" width="1" height="32" fill="#fbfbfb"/>
<path d="M636 57.5h3M636 59.5h3M636 61.5h3M636 63.5h3M636 65.5h3M636 67.5h3M636 69.5h3M636 71.5h3M636 73.5h3M636 75.5h3M636 77.5h3M636 79.5h3M636 81.5h3M636 83.5h3" stroke="#a0a0a0" stroke-width="1" shape-rendering="crispEdges"/>
<path d="M652.8 63V80 M649.8 77H666.8" stroke="#5a5a5a" stroke-width="1.8" fill="none"/><path d="M650.1999999999999 65.6L652.8 62.4L655.4 65.6z M665.1999999999999 74.4L668.5999999999999 77L665.1999999999999 79.6z" fill="#5a5a5a"/>
<path d="M660.700 64.500v10 M660.700 65.500h3.500 M660.700 73.500h-3.500" stroke="#1a9a1a" stroke-width="1.800" fill="none"/>
<rect x="676" y="55" width="31" height="29" fill="#f9f9f9"/><path d="M676.5 84V55.5H707" stroke="#808080" stroke-width="1" fill="none"/><path d="M706.5 56V83.5H677" stroke="#ffffff" stroke-width="1" fill="none"/>
<path d="M686.7 63V80 M683.7 77H700.7" stroke="#5a5a5a" stroke-width="1.8" fill="none"/><path d="M684.1 65.6L686.7 62.4L689.3000000000001 65.6z M699.1 74.4L702.5 77L699.1 79.6z" fill="#5a5a5a"/>
<path d="M694.500 60v15" stroke="#0a9a0a" stroke-width="1.600"/><rect x="691.500" y="63" width="6" height="9.500" fill="#30d830" stroke="#0a9a0a" stroke-width="1"/>
<path d="M720.7 63V80 M717.7 77H734.7" stroke="#5a5a5a" stroke-width="1.8" fill="none"/><path d="M718.1 65.6L720.7 62.4L723.3000000000001 65.6z M733.1 74.4L736.5 77L733.1 79.6z" fill="#5a5a5a"/>
<path d="M719.500 73.500q2-2 3.500-4.500t3.200-2.500q1.800 0 3.800 2.500t3.800 3.500" stroke="#2a8a2a" stroke-width="1.800" fill="none"/>
<rect x="745" y="56" width="1" height="28" fill="#9a9a9a"/><rect x="746" y="56" width="1" height="28" fill="#fbfbfb"/>
<path d="M768.0 74l6.500 6" stroke="#c99a14" stroke-width="4" stroke-linecap="round"/><path d="M768.0 74l6.500 6" stroke="#f2d860" stroke-width="1.800" stroke-linecap="round"/>
<circle cx="762.5" cy="68" r="7" fill="#d6eafa" stroke="#3a82d8" stroke-width="1.800"/>
<path d="M758.5 68h8 M762.5 64v8" stroke="#2a78b4" stroke-width="2.200"/>
<path d="M801.9 74l6.500 6" stroke="#c99a14" stroke-width="4" stroke-linecap="round"/><path d="M801.9 74l6.500 6" stroke="#f2d860" stroke-width="1.800" stroke-linecap="round"/>
<circle cx="796.4" cy="68" r="7" fill="#d6eafa" stroke="#3a82d8" stroke-width="1.800"/>
<path d="M792.4 68h8" stroke="#2a78b4" stroke-width="2.200"/>
<rect x="823" y="60" width="10" height="10" rx="1" fill="#3aa018"/><path d="M824.8 68v-4.500h6.400v4.500h-1.500v-1.500h-3.400v1.500z" fill="#fff" fill-opacity=".92"/>
<rect x="833.2" y="60" width="10" height="10" rx="1" fill="#1e56d0"/><path d="M835.0 68v-4.500h6.400v4.500h-1.500v-1.500h-3.400v1.500z" fill="#fff" fill-opacity=".92"/>
<rect x="823" y="70.2" width="10" height="10" rx="1" fill="#1e56d0"/><path d="M824.8 78.2v-4.500h6.400v4.500h-1.500v-1.500h-3.400v1.500z" fill="#fff" fill-opacity=".92"/>
<rect x="833.2" y="70.2" width="10" height="10" rx="1" fill="#3aa018"/><path d="M835.0 78.2v-4.500h6.400v4.500h-1.500v-1.500h-3.400v1.500z" fill="#fff" fill-opacity=".92"/>
<rect x="853" y="56" width="1" height="28" fill="#9a9a9a"/><rect x="854" y="56" width="1" height="28" fill="#fbfbfb"/>
<rect x="858" y="55" width="31" height="29" fill="#f9f9f9"/><path d="M858.5 84V55.5H889" stroke="#808080" stroke-width="1" fill="none"/><path d="M888.5 56V83.5H859" stroke="#ffffff" stroke-width="1" fill="none"/>
<path d="M868.8 63V80 M865.8 77H882.8" stroke="#5a5a5a" stroke-width="1.8" fill="none"/><path d="M866.1999999999999 65.6L868.8 62.4L871.4 65.6z M881.1999999999999 74.4L884.5999999999999 77L881.1999999999999 79.6z" fill="#5a5a5a"/>
<path d="M874.500 65v9l5.500-4.500z" fill="#30c040" stroke="#10a020" stroke-width="1"/>
<rect x="892" y="55" width="31" height="29" fill="#f9f9f9"/><path d="M892.5 84V55.5H923" stroke="#808080" stroke-width="1" fill="none"/><path d="M922.5 56V83.5H893" stroke="#ffffff" stroke-width="1" fill="none"/>
<path d="M902.8 63V80 M899.8 77H916.8" stroke="#5a5a5a" stroke-width="1.8" fill="none"/><path d="M900.1999999999999 65.6L902.8 62.4L905.4 65.6z M915.1999999999999 74.4L918.5999999999999 77L915.1999999999999 79.6z" fill="#5a5a5a"/>
<path d="M910.400 63v12.500" stroke="#1a70c0" stroke-width="1.600"/><path d="M911.500 69.500l3.500-3v2h3v2h-3v2z" fill="#e86010"/>
<rect x="927" y="56" width="1" height="28" fill="#9a9a9a"/><rect x="928" y="56" width="1" height="28" fill="#fbfbfb"/>
<path d="M939 62q0-1.500 1.500-1.500h8.500l4.500 4.500v11q0 1.500-1.500 1.500h-11.500q-1.500 0-1.500-1.500z" fill="#fbfbfb" stroke="#8a8a8a" stroke-width="1.200"/><path d="M949 60.500v4.500h4.500" fill="#e8e8e8" stroke="#8a8a8a" stroke-width="1"/>
<path d="M946 64.500q-2.500-.500-2.500 2.500v8 M941.800 69h4" stroke="#444" stroke-width="1.300" fill="none"/>
<path d="M948.8 68.0h5v4.7h4.7v5h-4.7v4.7h-5v-4.7h-4.7v-5h4.7z" fill="#2fd12f" stroke="#0c9a0c" stroke-width="1"/><path d="M949.8 69.2h3 M945.3 73.7h12.0" stroke="#8af08a" stroke-width="1" fill="none"/>
<path d="M963 69h7.4l-3.7 4z" fill="#000"/>
<circle cx="994.200" cy="70" r="8.800" fill="#f4f4f4" stroke="#1878d8" stroke-width="2.800"/><path d="M994.200 64.500v6h4.200" stroke="#333" stroke-width="1.400" fill="none"/><circle cx="994.200" cy="70" r="9.900" fill="none" stroke="#0a58b0" stroke-width=".8"/>
<path d="M1009.6 69h7.4l-3.7 4z" fill="#000"/>
<rect x="1031.500" y="61.500" width="19.500" height="17" rx="1" fill="#fff" stroke="#3a7cd0" stroke-width="1.200"/><rect x="1032" y="62" width="18.500" height="2.600" fill="#4a8cdc"/><path d="M1032 71h18.500" stroke="#6aa0e0" stroke-width="1.200"/>
<path d="M1034 69l3-1.500 3-1.800 3 1.500 3.500-2 2.500.3" stroke="#c03010" stroke-width="1.500" fill="none"/><path d="M1034.500 76l3-1.500 3 .8 3.500-2.500 3 2.800" stroke="#2a9a2a" stroke-width="1.500" fill="none"/>
<path d="M1056.7 69h7.4l-3.7 4z" fill="#000"/>
<rect x="1072" y="54" width="1" height="33" fill="#a0a0a0"/>
<path d="M0 91.5h2M0 93.5h2M0 95.5h2M0 97.5h2M0 99.5h2M0 101.5h2M0 103.5h2M0 105.5h2M0 107.5h2M0 109.5h2M0 111.5h2M0 113.5h2M0 115.5h2M0 117.5h2" stroke="#a0a0a0" stroke-width="1" shape-rendering="crispEdges"/>
<rect x="5" y="89" width="31" height="29" fill="#f9f9f9"/><path d="M5.5 118V89.5H36" stroke="#808080" stroke-width="1" fill="none"/><path d="M35.5 90V117.5H6" stroke="#ffffff" stroke-width="1" fill="none"/>
<path d="M15.200 95.200v14.200l3.400-3.200 3.200 6.600 2.400-1.200-3.200-6.400 4.600-.4z" fill="#4a4a4a"/>
<path d="M45.200 104.800h8.300 M56.200 104.800h8.300 M54.800 95.300v8.200 M54.800 106.200v8.200" stroke="#555" stroke-width="1.800"/>
<rect x="74" y="90" width="1" height="28" fill="#9a9a9a"/><rect x="75" y="90" width="1" height="28" fill="#fbfbfb"/>
<path d="M94.800 96.800v16" stroke="#555" stroke-width="1.800"/>
<path d="M121.800 104.800h15.300" stroke="#555" stroke-width="1.800"/>
<path d="M155.500 112.700l16-15.200" stroke="#555" stroke-width="1.800"/>
<path d="M187 107.500l16-10 M190 113l15-10" stroke="#555" stroke-width="1.500"/><path d="M190.500 111.500l3-7.500 M194 109.500l3-7.500 M197.500 107.500l3-7.500 M201.500 104l1.500-9" stroke="#555" stroke-width="1.200"/>
<path d="M202 109.500h5 M202 112.300h4.500 M202 115h5 M202.600 109v6.500" stroke="#555" stroke-width="1.500" fill="none"/>
<path d="M222.300 96H239" stroke="#555" stroke-width="1.600" stroke-dasharray="1.300 1"/>
<path d="M222.300 100H239" stroke="#555" stroke-width="1.600" stroke-dasharray="1.300 1"/>
<path d="M222.300 104.8H239" stroke="#555" stroke-width="1.600" stroke-dasharray="1.300 1"/>
<path d="M222.300 110H233" stroke="#555" stroke-width="1.600" stroke-dasharray="1.300 1"/>
<path d="M235.400 110.300h5 M235.400 112.800h4 M236 109.700v6" stroke="#555" stroke-width="1.500" fill="none"/>
<path d="M261 110.300l4.200-10l4.200 10 M262.600 107h5.200" stroke="#555" stroke-width="1.900" fill="none"/>
<rect x="292.500" y="97.300" width="14" height="15" fill="none" stroke="#555" stroke-width="1.200" stroke-dasharray="1.200 1.200"/><path d="M295 101h9.500 M299.700 101v10" stroke="#555" stroke-width="2.200" fill="none"/>
<path d="M325 100.500l3.800-3.800 3.800 3.800-1.800 0 0 1.500-4 0 0-1.500z M334.200 109l3.800 3.800 3.800-3.800-1.800 0 0-1.500-4 0 0 1.500z" fill="#555"/><path d="M327.500 106l2.500 2.500 5.500-6.500" stroke="#555" stroke-width="1.600" fill="none"/>
<path d="M347.8 103h7.4l-3.7 4z" fill="#000"/>
<rect x="363" y="88" width="1" height="32" fill="#9a9a9a"/><rect x="364" y="88" width="1" height="32" fill="#fbfbfb"/>
<path d="M367 91.5h3M367 93.5h3M367 95.5h3M367 97.5h3M367 99.5h3M367 101.5h3M367 103.5h3M367 105.5h3M367 107.5h3M367 109.5h3M367 111.5h3M367 113.5h3M367 115.5h3M367 117.5h3" stroke="#a0a0a0" stroke-width="1" shape-rendering="crispEdges"/>
<rect x="577" y="89" width="31" height="29" fill="#f9f9f9"/><path d="M577.5 118V89.5H608" stroke="#808080" stroke-width="1" fill="none"/><path d="M607.5 90V117.5H578" stroke="#ffffff" stroke-width="1" fill="none"/>
<rect x="678" y="88" width="1" height="32" fill="#a0a0a0"/>
<rect x="0" y="2" width="19" height="20" fill="#fff"/>
<path d="M7.600 5L12.900 4.700L10.800 8.800L12.900 13.800L10 19.200L5 19.200L7.300 14.600L5 9.700z" fill="#2ab394" stroke="#2ab394" stroke-width=".6" stroke-linejoin="round"/>
<rect x="1855" y="0" width="57" height="23.5" fill="#c75a50"/>
<path d="M1786.5 0V23.5H1855.5 M1822.5 0V23.5 M1855.5 0V23.5" stroke="#27404d" stroke-width="1" fill="none"/>
<rect x="1798" y="13" width="15" height="3" fill="#000"/>
<path d="M1835.5 3h11v10h-11z" stroke="#000" stroke-width="2.4" fill="none"/><path d="M1831.5 6.500h11v10h-11z" stroke="#000" stroke-width="2.400" fill="#67caea"/>
<path d="M1879 4.5L1890.5 16 M1890.5 4.5L1879 16" stroke="#000" stroke-width="3.2" fill="none"/>
<rect x="1845.5" y="28.5" width="23" height="22" fill="#f6f6f6" stroke="#8e8e8e" stroke-width="1"/>
<rect x="1870.0" y="28.5" width="23" height="22" fill="#f6f6f6" stroke="#8e8e8e" stroke-width="1"/>
<rect x="1894.0" y="28.5" width="20" height="22" fill="#f6f6f6" stroke="#8e8e8e" stroke-width="1"/>
<rect x="1854" y="41" width="6" height="2" fill="#000"/>
<path d="M1880 35.800h5.500v4.200h-5.500z" stroke="#000" stroke-width="1.500" fill="none"/><path d="M1877.700 38.600h6v4.200h-6z" stroke="#000" stroke-width="1.500" fill="#f6f6f6"/><path d="M1877.700 39.200h6 M1880 36.300h5.500" stroke="#000" stroke-width="1.200"/>
<path d="M1901.5 35.5l6 6 M1907.5 35.5l-6 6" stroke="#000" stroke-width="1.8" fill="none"/>
<g><rect x="3" y="30" width="15.200" height="11.200" fill="#eef4fe" stroke="#3f76d8" stroke-width="1.400"/><path d="M5 36l2-3 2 2.500 2-3.500 2 4" stroke="#5a8ae0" fill="none" stroke-width="1.100"/><rect x="7" y="37" width="14.600" height="11.200" fill="#f4f8ff" stroke="#3f76d8" stroke-width="1.400"/><path d="M9.500 42l2 3.500 2.200-5 2.200 5.500 2-3 1 1.500" stroke="#4a7ee0" fill="none" stroke-width="1.200"/></g>
<g><circle cx="1858.5" cy="67" r="5.2" fill="#eaf2fb" stroke="#3a6fd0" stroke-width="2"/><path d="M1854.5 71.5l-6.5 6" stroke="#2d5fc4" stroke-width="3" stroke-linecap="round"/></g>
<g><path d="M1880.5 72a7 5.5 0 1 1 9 6.5l-5 3l1-3.2a7 5.5 0 0 1-5-6.3z" fill="#e4e6ea" stroke="#b4b8c0"/><circle cx="1898" cy="67" r="9.6" fill="#e23a1c"/><path d="M1895 63.5l3.2-2.2h1.2v11h-2.4v-7.8l-2 1.2z" fill="#fff"/></g>
<path d="M3.200 872.200l7.600 7 M10.800 872.200l-7.600 7" stroke="#000" stroke-width="1.500" fill="none"/>
<path d="M22.500 902q0-1.300 1.300-1.300h7.200l3.500 3.500v11q0 1.300-1.300 1.300h-9.400q-1.300 0-1.300-1.300z" fill="#fafafa" stroke="#8c8c8c" stroke-width="1"/><path d="M31 900.700v3.500h3.500" fill="#ddd" stroke="#8c8c8c" stroke-width=".9"/><circle cx="35" cy="914.300" r="3.900" fill="#e8401c"/><circle cx="34" cy="913.200" r="1.400" fill="#ff8a60"/>
<path d="M802.500 881.500h5l-2.500 4z" fill="#fdfdfd" stroke="#7a7a7a" stroke-width=".9"/>
<path d="M1871.500 903.500l11 11 M1882.500 903.500l-11 11" stroke="#a9a39b" stroke-width="1.900" fill="none"/>
<path d="M1895 884l4.500-5 4.500 5" stroke="#505050" stroke-width="1.400" fill="none"/>
<path d="M1880.500 846.300v7.600l-4.500-3.800z M1901 846.300v7.600l4.500-3.800z" fill="#a3a3a3"/>
</svg><span class="t" style="left:710.00px;top:5.59px;font-size:17.5px;color:#000;letter-spacing:0.328px;">1016: SkillingLimited-Live - Skilling Limited - [GBPJPY!,Daily]</span>
<span class="t" style="left:31.30px;top:33.23px;font-size:14.5px;color:#000;letter-spacing:-0.194px;">File</span>
<span class="t" style="left:74.50px;top:33.23px;font-size:14.5px;color:#000;letter-spacing:0.027px;">Visualizza</span>
<span class="t" style="left:160.50px;top:33.23px;font-size:14.5px;color:#000;letter-spacing:-0.076px;">Inserisci</span>
<span class="t" style="left:233.80px;top:33.23px;font-size:14.5px;color:#000;letter-spacing:0.199px;">Grafici</span>
<span class="t" style="left:297.90px;top:33.23px;font-size:14.5px;color:#000;letter-spacing:0.238px;">Strumenti</span>
<span class="t" style="left:382.90px;top:33.23px;font-size:14.5px;color:#000;letter-spacing:-0.186px;">Finestra</span>
<span class="t" style="left:454.50px;top:33.23px;font-size:14.5px;color:#000;letter-spacing:0.687px;">Aiuto</span>
<span class="t" style="left:311.80px;top:62.53px;font-size:14.5px;color:#000;letter-spacing:0.421px;">Nuovo ordine</span>
<span class="t" style="left:543.30px;top:62.53px;font-size:14.5px;color:#000;letter-spacing:0.357px;">AutoTrading</span>
<span class="t" style="left:379.20px;top:100.07px;font-size:11.5px;color:#555;letter-spacing:0.558px;">M1</span>
<span class="t" style="left:413.30px;top:100.07px;font-size:11.5px;color:#555;letter-spacing:0.508px;">M5</span>
<span class="t" style="left:444.40px;top:100.07px;font-size:11.5px;color:#555;letter-spacing:0.742px;">M15</span>
<span class="t" style="left:478.50px;top:100.07px;font-size:11.5px;color:#555;letter-spacing:0.608px;">M30</span>
<span class="t" style="left:516.50px;top:100.07px;font-size:11.5px;color:#555;letter-spacing:0.548px;">H1</span>
<span class="t" style="left:549.50px;top:100.07px;font-size:11.5px;color:#555;letter-spacing:0.898px;">H4</span>
<span class="t" style="left:584.50px;top:100.07px;font-size:11.5px;color:#555;letter-spacing:0.798px;">D1</span>
<span class="t" style="left:618.30px;top:100.07px;font-size:11.5px;color:#555;letter-spacing:0.575px;">W1</span>
<span class="t" style="left:650.20px;top:100.07px;font-size:11.5px;color:#555;letter-spacing:1.105px;">MN</span>
<span class="t" style="left:20.50px;top:129.34px;font-size:12px;color:#000;letter-spacing:0.213px;">GBPJPY!,Daily  210.517 211.216 209.622 210.365</span>
<span class="t" style="left:10.50px;top:243.84px;font-size:12px;color:#000;letter-spacing:0.282px;">#9619426 sell 0.41</span>
<span class="t" style="left:10.50px;top:314.84px;font-size:12px;color:#000;letter-spacing:0.551px;">#9619426 tp</span>
<span class="t" style="left:6.00px;top:710.44px;font-size:12px;color:#000;letter-spacing:0.357px;">Stoch(5,3,3) 22.9604 43.7131</span>
<span class="t" style="left:1753.00px;top:187.33px;font-size:36px;color:#bdb76b;letter-spacing:-0.959px;">+75.0</span>
<span class="t" style="left:1852.00px;top:139.64px;font-size:12px;color:#000;letter-spacing:0.344px;">215.310</span>
<span class="t" style="left:1852.00px;top:188.64px;font-size:12px;color:#000;letter-spacing:0.344px;">213.490</span>
<span class="t" style="left:1852.00px;top:237.64px;font-size:12px;color:#000;letter-spacing:0.471px;">211.670</span>
<span class="t" style="left:1852.00px;top:286.64px;font-size:12px;color:#000;letter-spacing:0.344px;">209.850</span>
<span class="t" style="left:1852.00px;top:335.64px;font-size:12px;color:#000;letter-spacing:0.344px;">207.995</span>
<span class="t" style="left:1852.00px;top:384.64px;font-size:12px;color:#000;letter-spacing:0.344px;">206.175</span>
<span class="t" style="left:1852.00px;top:433.64px;font-size:12px;color:#000;letter-spacing:0.344px;">204.355</span>
<span class="t" style="left:1852.00px;top:482.64px;font-size:12px;color:#000;letter-spacing:0.344px;">202.535</span>
<span class="t" style="left:1852.00px;top:531.64px;font-size:12px;color:#000;letter-spacing:0.344px;">200.680</span>
<span class="t" style="left:1852.00px;top:580.64px;font-size:12px;color:#000;letter-spacing:0.344px;">198.860</span>
<span class="t" style="left:1852.00px;top:629.64px;font-size:12px;color:#000;letter-spacing:0.344px;">197.040</span>
<span class="t" style="left:1852.00px;top:678.64px;font-size:12px;color:#000;letter-spacing:0.344px;">195.220</span>
<span class="t" style="left:1852.00px;top:272.24px;font-size:12px;color:#fff;letter-spacing:0.344px;">210.365</span>
<span class="t" style="left:1849.00px;top:708.64px;font-size:12px;color:#000;letter-spacing:-0.077px;">100</span>
<span class="t" style="left:1848.00px;top:722.14px;font-size:12px;color:#000;letter-spacing:0.220px;">80</span>
<span class="t" style="left:1848.00px;top:786.44px;font-size:12px;color:#000;letter-spacing:0.220px;">20</span>
<span class="t" style="left:1849.00px;top:800.64px;font-size:12px;color:#000;letter-spacing:0.000px;">0</span>
<span class="t" style="left:1.00px;top:818.84px;font-size:12px;color:#000;letter-spacing:0.250px;">11 Jul 2025</span>
<span class="t" style="left:97.00px;top:818.84px;font-size:12px;color:#000;letter-spacing:0.250px;">29 Jul 2025</span>
<span class="t" style="left:193.00px;top:818.84px;font-size:12px;color:#000;letter-spacing:0.250px;">14 Aug 2025</span>
<span class="t" style="left:289.00px;top:818.84px;font-size:12px;color:#000;letter-spacing:0.250px;">1 Sep 2025</span>
<span class="t" style="left:385.00px;top:818.84px;font-size:12px;color:#000;letter-spacing:0.250px;">17 Sep 2025</span>
<span class="t" style="left:481.00px;top:818.84px;font-size:12px;color:#000;letter-spacing:0.250px;">3 Oct 2025</span>
<span class="t" style="left:577.00px;top:818.84px;font-size:12px;color:#000;letter-spacing:0.250px;">21 Oct 2025</span>
<span class="t" style="left:673.00px;top:818.84px;font-size:12px;color:#000;letter-spacing:0.250px;">5 Nov 2025</span>
<span class="t" style="left:769.00px;top:818.84px;font-size:12px;color:#000;letter-spacing:0.250px;">21 Nov 2025</span>
<span class="t" style="left:865.00px;top:818.84px;font-size:12px;color:#000;letter-spacing:0.250px;">9 Dec 2025</span>
<span class="t" style="left:961.00px;top:818.84px;font-size:12px;color:#000;letter-spacing:0.250px;">26 Dec 2025</span>
<span class="t" style="left:1057.00px;top:818.84px;font-size:12px;color:#000;letter-spacing:0.250px;">14 Jan 2026</span>
<span class="t" style="left:1153.00px;top:818.84px;font-size:12px;color:#000;letter-spacing:0.250px;">30 Jan 2026</span>
<span class="t" style="left:1249.00px;top:818.84px;font-size:12px;color:#000;letter-spacing:0.250px;">17 Feb 2026</span>
<span class="t" style="left:1345.00px;top:818.84px;font-size:12px;color:#000;letter-spacing:0.250px;">5 Mar 2026</span>
<span class="t" style="left:1441.00px;top:818.84px;font-size:12px;color:#000;letter-spacing:0.250px;">19 Mar 2026</span>
<span class="t" style="left:17.70px;top:845.13px;font-size:14.5px;color:#6f7b8b;letter-spacing:-0.581px;">CHFJPY!,Weekly</span>
<span class="t" style="left:149.50px;top:845.13px;font-size:14.5px;color:#6f7b8b;letter-spacing:-0.472px;">EURGBP!,Daily</span>
<span class="t" style="left:274.10px;top:845.13px;font-size:14.5px;color:#6f7b8b;letter-spacing:-0.131px;">EURNZD!,Daily</span>
<span class="t" style="left:400.50px;top:845.13px;font-size:14.5px;color:#6f7b8b;letter-spacing:-0.530px;">CHFJPY!,Daily</span>
<span class="t" style="left:517.50px;top:845.13px;font-size:14.5px;color:#6f7b8b;letter-spacing:-0.071px;">USDDKK!,Daily</span>
<span class="t" style="left:645.30px;top:845.13px;font-size:14.5px;color:#6f7b8b;letter-spacing:-0.203px;">USDDKK!,H4</span>
<span class="t" style="left:757.70px;top:845.13px;font-size:14.5px;color:#6f7b8b;letter-spacing:-0.273px;">USDDKK!,H1</span>
<span class="t" style="left:868.50px;top:845.13px;font-size:14.5px;color:#6f7b8b;letter-spacing:-0.218px;">USDDKK!,M15</span>
<span class="t" style="left:989.50px;top:845.13px;font-size:14.5px;color:#6f7b8b;letter-spacing:-0.454px;">USDJPY!,Daily</span>
<span class="t" style="left:1224.30px;top:845.13px;font-size:14.5px;color:#6f7b8b;letter-spacing:-0.183px;">AUDUSD!,H1</span>
<span class="t" style="left:1109.00px;top:845.13px;font-size:14.5px;color:#000;letter-spacing:-0.646px;">GBPJPY!,Daily</span>
<span class="t" style="left:23.70px;top:877.13px;font-size:14.5px;color:#000;letter-spacing:0.261px;">Ordine</span>
<span class="t" style="left:374.69px;top:877.13px;font-size:14.5px;color:#000;letter-spacing:0.486px;">Data/Orario</span>
<span class="t" style="left:552.73px;top:877.13px;font-size:14.5px;color:#000;letter-spacing:0.532px;">Tipo</span>
<span class="t" style="left:651.78px;top:877.13px;font-size:14.5px;color:#000;letter-spacing:0.776px;">Lotti</span>
<span class="t" style="left:907.56px;top:877.13px;font-size:14.5px;color:#000;letter-spacing:-0.140px;">Prezzo</span>
<span class="t" style="left:1064.99px;top:877.13px;font-size:14.5px;color:#000;letter-spacing:-0.006px;">S / L</span>
<span class="t" style="left:1164.64px;top:877.13px;font-size:14.5px;color:#000;letter-spacing:0.536px;">Take profit</span>
<span class="t" style="left:1333.56px;top:877.13px;font-size:14.5px;color:#000;letter-spacing:-0.140px;">Prezzo</span>
<span class="t" style="left:1430.48px;top:877.13px;font-size:14.5px;color:#000;letter-spacing:0.178px;">Commissione</span>
<span class="t" style="left:1621.83px;top:877.13px;font-size:14.5px;color:#000;letter-spacing:0.130px;">Swap</span>
<span class="t" style="left:1835.18px;top:877.13px;font-size:14.5px;color:#000;letter-spacing:0.483px;">Profitto</span>
<span class="t" style="left:733.90px;top:877.13px;font-size:14.5px;color:#000;letter-spacing:0.530px;">Simbolo</span>
<span class="t" style="left:45.00px;top:901.10px;font-size:15px;color:#fff;letter-spacing:-0.258px;">9619426</span>
<span class="t" style="left:326.23px;top:901.10px;font-size:15px;color:#fff;letter-spacing:-0.465px;">2026.03.31 04:04:00</span>
<span class="t" style="left:560.90px;top:901.10px;font-size:15px;color:#fff;letter-spacing:-0.304px;">sell</span>
<span class="t" style="left:655.72px;top:901.10px;font-size:15px;color:#fff;letter-spacing:-0.476px;">0.41</span>
<span class="t" style="left:902.34px;top:901.10px;font-size:15px;color:#fff;letter-spacing:-0.258px;">211.127</span>
<span class="t" style="left:1043.94px;top:901.10px;font-size:15px;color:#fff;letter-spacing:-0.258px;">211.127</span>
<span class="t" style="left:1185.35px;top:901.10px;font-size:15px;color:#fff;letter-spacing:-0.348px;">208.486</span>
<span class="t" style="left:1327.35px;top:901.10px;font-size:15px;color:#fff;letter-spacing:-0.348px;">210.377</span>
<span class="t" style="left:1488.42px;top:901.10px;font-size:15px;color:#fff;letter-spacing:-0.181px;">-2.46</span>
<span class="t" style="left:1635.35px;top:901.10px;font-size:15px;color:#fff;letter-spacing:-0.351px;">0.00</span>
<span class="t" style="left:1817.18px;top:901.10px;font-size:15px;color:#fff;letter-spacing:-0.515px;">167.56</span>
<span class="t" style="left:759.90px;top:901.10px;font-size:15px;color:#fff;letter-spacing:0.489px;">gbpjpy!</span>
</body></html>
